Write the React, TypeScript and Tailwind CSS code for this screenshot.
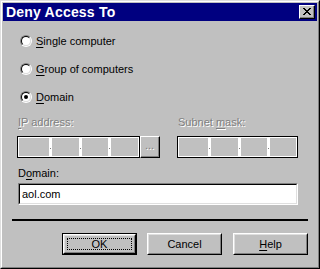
const font = { fontFamily: '"Liberation Sans", Arial, sans-serif' };

function Radio({ checked }: { checked?: boolean }) {
  return (
    <div className="w-[12px] h-[12px] rounded-full border border-t-[#808080] border-l-[#808080] border-r-white border-b-white">
      <div className="w-full h-full rounded-full border border-t-black border-l-black border-r-[#dfdfdf] border-b-[#dfdfdf] bg-white flex items-center justify-center">
        {checked && <div className="w-[4px] h-[4px] rounded-full bg-black" />}
      </div>
    </div>
  );
}

function RadioRow({ ul, rest, checked }: { ul: string; rest: string; checked?: boolean }) {
  return (
    <div className="flex items-center h-[16px] pl-[17px] gap-[4px]">
      <Radio checked={checked} />
      <span className="text-[11px] leading-[13px] text-black">
        <span className="underline underline-offset-2">{ul}</span>
        {rest}
      </span>
    </div>
  );
}

function IpBox({ width }: { width: string }) {
  return (
    <div className={`${width} h-[22px] border border-black bg-white p-[1px] flex`}>
      {[0, 1, 2, 3].map((i) => (
        <div key={i} className="flex flex-1 h-full">
          {i > 0 && (
            <div className="w-[3px] h-full bg-white flex items-center justify-center">
              <div className="w-[1px] h-[1px] bg-[#808080] mt-[2px]" />
            </div>
          )}
          <div className="flex-1 h-full bg-[#c0c0c0]" />
        </div>
      ))}
    </div>
  );
}

function Button({ children, isDefault, className }: { children: React.ReactNode; isDefault?: boolean; className?: string }) {
  const inner = (
    <div className="h-full border border-t-white border-l-white border-r-black border-b-black">
      <div className="h-full border border-t-[#dfdfdf] border-l-[#dfdfdf] border-r-[#808080] border-b-[#808080] flex items-center justify-center p-[2px]">
        <div className={`w-full h-full flex items-center justify-center text-[11px] text-black ${isDefault ? "border border-dotted border-black" : ""}`}>
          {children}
        </div>
      </div>
    </div>
  );
  return (
    <div className={`w-[75px] h-[22px] ${isDefault ? "border border-black" : ""} ${className ?? ""}`}>{inner}</div>
  );
}

export default function App() {
  const disabled = "text-[11px] leading-[13px] text-[#808080] [text-shadow:1px_1px_0_#ffffff]";
  return (
    <div style={font} className="w-[320px] h-[269px] bg-[#c0c0c0] border border-t-[#dfdfdf] border-l-[#dfdfdf] border-r-black border-b-black select-none">
      <div className="h-full border border-t-white border-l-white border-r-[#808080] border-b-[#808080] p-[1px] flex flex-col">
        {/* title bar */}
        <div className="h-[18px] bg-[#000080] flex items-center justify-between pl-[3px] pr-[2px]">
          <span className="text-white font-bold text-[14px] leading-[16px] tracking-[0.2px]">Deny Access To</span>
          <div className="w-[16px] h-[14px] bg-[#c0c0c0] border border-t-white border-l-white border-r-black border-b-black">
            <div className="w-full h-full border-r border-b border-[#808080] flex items-center justify-center">
              <svg width="8" height="7" viewBox="0 0 8 7" shapeRendering="crispEdges">
                <path d="M0 0h2v1h-2zM6 0h2v1h-2zM1 1h2v1h-2zM5 1h2v1h-2zM2 2h4v1h-4zM3 3h2v1h-2zM2 4h4v1h-4zM1 5h2v1h-2zM5 5h2v1h-2zM0 6h2v1h-2zM6 6h2v1h-2z" fill="#000" />
              </svg>
            </div>
          </div>
        </div>

        {/* radios */}
        <div className="flex flex-col gap-[12px] pt-[12px]">
          <RadioRow ul="S" rest="ingle computer" />
          <RadioRow ul="G" rest="roup of computers" />
          <RadioRow ul="D" rest="omain" checked />
        </div>

        {/* ip / subnet */}
        <div className="flex mt-[11px] pl-[14px]">
          <div className="w-[160px] flex flex-col">
            <span className={`${disabled} pl-[1px]`}>
              <span className="underline underline-offset-2">I</span>P address:
            </span>
            <div className="flex mt-[7px]">
              <IpBox width="w-[123px]" />
              <div className="w-[20px] h-[22px] border border-t-white border-l-white border-r-black border-b-black">
                <div className="h-full border-r border-b border-[#808080] flex items-end justify-center pb-[4px]">
                  <span className={`${disabled} leading-[9px]`}>...</span>
                </div>
              </div>
            </div>
          </div>
          <div className="flex flex-col">
            <span className={`${disabled} pl-[1px]`}>
              Subnet <span className="underline underline-offset-2">m</span>ask:
            </span>
            <div className="mt-[7px]">
              <IpBox width="w-[121px]" />
            </div>
          </div>
        </div>

        {/* domain */}
        <div className="flex flex-col mt-[9px] pl-[15px]">
          <span className="text-[11px] leading-[13px] text-black">
            D<span className="underline underline-offset-2">o</span>main:
          </span>
          <div className="mt-[3px] w-[280px] h-[22px] border border-t-[#808080] border-l-[#808080] border-r-white border-b-white">
            <div className="h-full border border-t-black border-l-black border-r-[#dfdfdf] border-b-[#dfdfdf] bg-white flex items-center pl-[2px]">
              <span className="text-[11px] leading-[13px] text-black">aol.com</span>
            </div>
          </div>
        </div>

        {/* separator */}
        <div className="mt-[14px] ml-[9px] w-[296px] h-[2px] bg-black" />

        {/* buttons */}
        <div className="flex mt-[12px]">
          <Button isDefault className="ml-[59px]">OK</Button>
          <Button className="ml-[10px]">Cancel</Button>
          <Button className="ml-[11px]">
            <span>
              <span className="underline underline-offset-2">H</span>elp
            </span>
          </Button>
        </div>
      </div>
    </div>
  );
}
